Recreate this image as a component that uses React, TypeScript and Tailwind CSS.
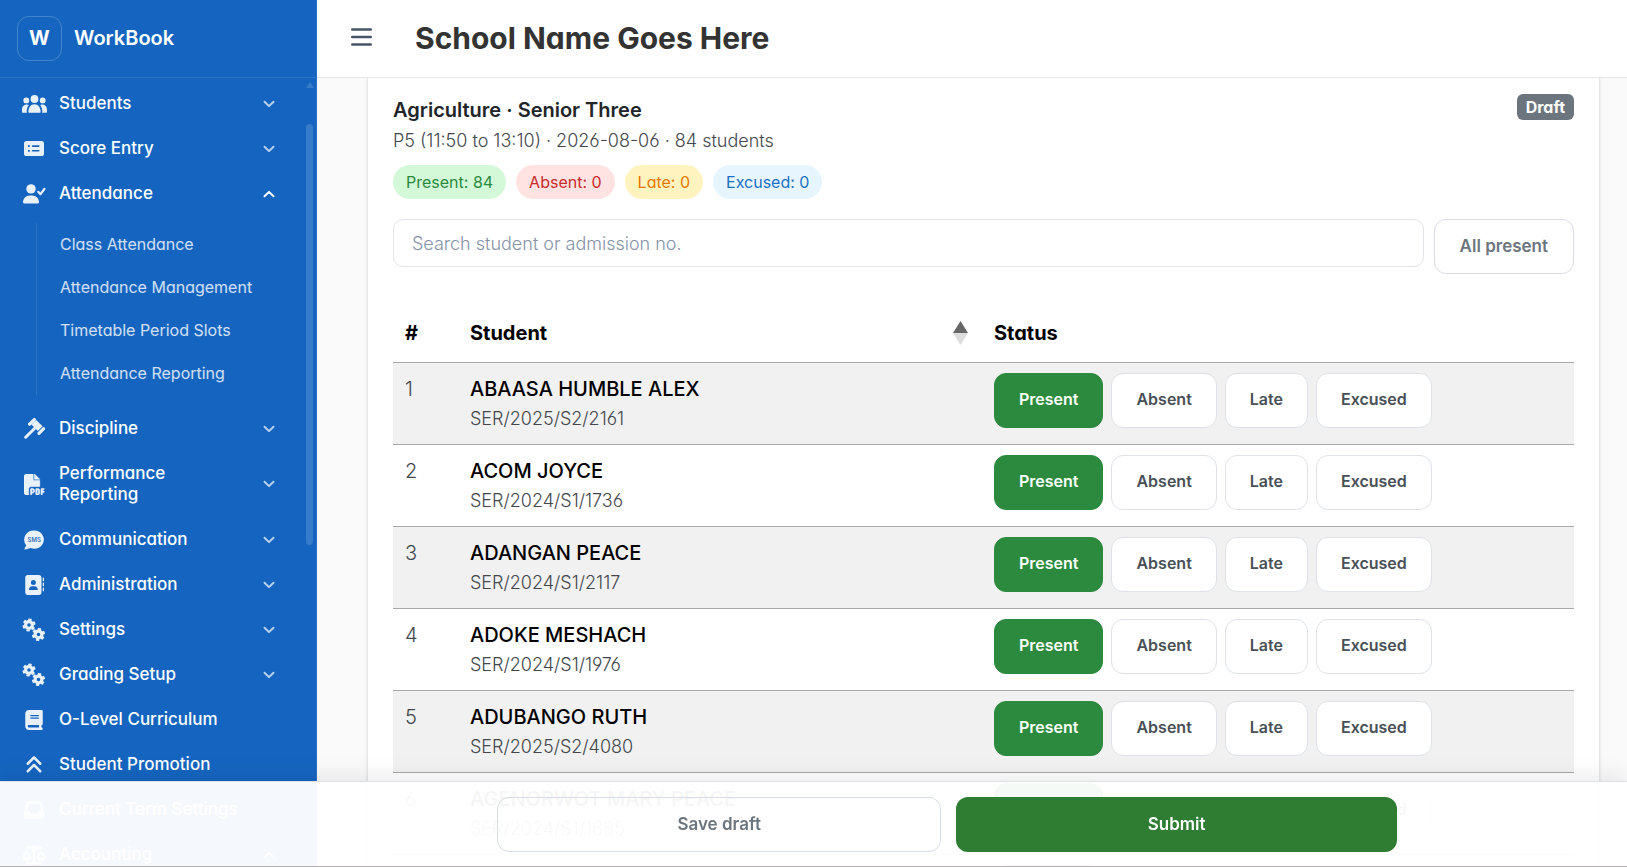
import { useState } from "react";
import type { ReactNode } from "react";
import { FaFilePdf, FaAddressBook, FaBook, FaAnglesUp, FaInbox, FaScaleBalanced } from "react-icons/fa6";

type NavItem = { label: string; icon: ReactNode; arrow?: "up" | "down"; children?: string[] };

function ListCardIcon() {
  return (
    <svg viewBox="0 0 20 15" className="h-[15px] w-5" aria-hidden="true">
      <path
        fill="currentColor"
        fillRule="evenodd"
        d="M2.6 0h14.8A2.6 2.6 0 0 1 20 2.6v9.8a2.6 2.6 0 0 1-2.6 2.6H2.6A2.6 2.6 0 0 1 0 12.4V2.6A2.6 2.6 0 0 1 2.6 0ZM4 4.200v1.800h1.800V4.200Zm0 4.700v1.800h1.800V8.900ZM8.600 4.300a.8.8 0 0 0 0 1.600h6.200a.8.8 0 0 0 0-1.600Zm0 4.700a.8.8 0 0 0 0 1.600h6.200a.8.8 0 0 0 0-1.600Z"
      />
    </svg>
  );
}

function PeopleIcon() {
  return (
    <svg viewBox="0 0 25 18" className="h-[18px] w-[25px] shrink-0" fill="currentColor" aria-hidden="true">
      <circle cx="12.500" cy="4" r="3.900" />
      <circle cx="4.300" cy="5.400" r="2.900" />
      <circle cx="20.700" cy="5.400" r="2.900" />
      <path d="M6.400 16.800C6.400 12.600 8.700 9.200 12.500 9.200s6.100 3.400 6.100 7.600c0 .7-.4 1-1 1H7.400c-.6 0-1-.3-1-1Z" />
      <path d="M6.800 10.100A4.800 4.800 0 0 0 4.600 9.600C1.800 9.600 0 12 0 15v1.700c0 .7.400 1.100 1 1.100h4c-.2-.3-.3-.7-.3-1.100 0-2.600.7-4.900 2.100-6.600Z" />
      <path d="M18.200 10.100a4.800 4.800 0 0 1 2.200-.5c2.800 0 4.600 2.400 4.600 5.400v1.700c0 .7-.4 1.100-1 1.100h-4c.2-.3.3-.7.300-1.100 0-2.600-.7-4.900-2.100-6.600Z" />
    </svg>
  );
}

function PersonCheckIcon() {
  return (
    <svg viewBox="0 0 24 20" className="h-5 w-6 shrink-0" fill="currentColor" aria-hidden="true">
      <circle cx="9" cy="4.900" r="4.700" />
      <path d="M1 18.300c0-4 2.900-6.900 6.600-6.900h2.800c3.700 0 6.600 2.900 6.600 6.900 0 .7-.5 1.200-1.200 1.200H2.200C1.500 19.500 1 19 1 18.300Z" />
      <path d="m16.200 7.800 2.300 2.400 3.900-5.200" fill="none" stroke="currentColor" strokeWidth="2.200" strokeLinecap="round" strokeLinejoin="round" />
    </svg>
  );
}

function GavelIcon() {
  return (
    <svg viewBox="0 0 21 21" className="size-[21px] shrink-0" stroke="currentColor" strokeLinecap="round" aria-hidden="true">
      <path d="m5.600 6.200 4.700-4.600M15 15.300l4.600-4.600" strokeWidth="3.200" />
      <path d="m7.400 6.600 4.800-4.700 6.400 6.400-4.800 4.700Z" fill="currentColor" stroke="none" />
      <path d="m1.700 19.200 8.600-8.500" strokeWidth="3" />
    </svg>
  );
}

function SmsBubbleIcon() {
  return (
    <svg viewBox="0 0 20 20" className="size-5 shrink-0" aria-hidden="true">
      <path d="M10.200.4a9.500 9.200 0 1 1-3.500 17.700L1.400 19.500c-.8.200-1.100-.4-.8-1l1.600-3.300A9.500 9.200 0 0 1 10.200.4Z" fill="currentColor" />
      <text x="10.200" y="12" textAnchor="middle" className="fill-[#1565c0] text-[6px] font-medium">SMS</text>
    </svg>
  );
}

const toothAngles = [10, 70, 130, 190, 250, 310];

function Gear({ x, y }: { x: number; y: number }) {
  return (
    <g transform={`translate(${x} ${y})`}>
      <circle r="3.400" strokeWidth="3.200" />
      {toothAngles.map((a) => (
        <g key={a} transform={`rotate(${a})`}>
          <path d="M0-4.600V-5.700" strokeWidth="3.400" />
          <path d="M-1.100-5.900h2.200" strokeWidth="1.200" strokeLinecap="round" />
        </g>
      ))}
    </g>
  );
}

function GearsIcon() {
  return (
    <svg viewBox="0 0 24 24" className="size-6 shrink-0" fill="none" stroke="currentColor" aria-hidden="true">
      <Gear x={7} y={7} />
      <Gear x={16.500} y={16.500} />
    </svg>
  );
}

const navItems: NavItem[] = [
  { label: "Students", icon: <PeopleIcon />, arrow: "down" },
  { label: "Score Entry", icon: <ListCardIcon />, arrow: "down" },
  {
    label: "Attendance",
    icon: <PersonCheckIcon />,
    arrow: "up",
    children: ["Class Attendance", "Attendance Management", "Timetable Period Slots", "Attendance Reporting"],
  },
  { label: "Discipline", icon: <GavelIcon />, arrow: "down" },
  { label: "Performance Reporting", icon: <FaFilePdf className="size-[21px]" stroke="currentColor" strokeWidth={14} />, arrow: "down" },
  { label: "Communication", icon: <SmsBubbleIcon />, arrow: "down" },
  { label: "Administration", icon: <FaAddressBook className="size-5" />, arrow: "down" },
  { label: "Settings", icon: <GearsIcon />, arrow: "down" },
  { label: "Grading Setup", icon: <GearsIcon />, arrow: "down" },
  { label: "O-Level Curriculum", icon: <FaBook className="size-5" /> },
  { label: "Student Promotion", icon: <FaAnglesUp className="size-5" /> },
  { label: "Current Term Settings", icon: <FaInbox className="size-5" /> },
  { label: "Accounting", icon: <FaScaleBalanced className="size-6" />, arrow: "up" },
];

const students = [
  { name: "ABAASA HUMBLE ALEX", no: "SER/2025/S2/2161" },
  { name: "ACOM JOYCE", no: "SER/2024/S1/1736" },
  { name: "ADANGAN PEACE", no: "SER/2024/S1/2117" },
  { name: "ADOKE MESHACH", no: "SER/2024/S1/1976" },
  { name: "ADUBANGO RUTH", no: "SER/2025/S2/4080" },
  { name: "AGENORWOT MARY PEACE", no: "SER/2024/S1/1885" },
  { name: "", no: "" },
];

const statuses = ["Present", "Absent", "Late", "Excused"];

function Chevron({ up }: { up: boolean }) {
  return (
    <svg viewBox="0 0 12 8" className={up ? "h-2 w-3 shrink-0 text-white" : "h-2 w-3 shrink-0 text-white/70"} fill="none" aria-hidden="true">
      <path d={up ? "M1.500 6.300 6 1.900l4.500 4.400" : "M1.500 1.700 6 6.100l4.500-4.400"} stroke="currentColor" strokeWidth="2" strokeLinecap="round" strokeLinejoin="round" />
    </svg>
  );
}

function Sidebar() {
  return (
    <aside className="flex w-[317px] shrink-0 flex-col border-r border-[#2a6fc5] bg-[#1565c0] text-white">
      <div className="flex h-[78px] shrink-0 items-center gap-3 border-b border-white/10 px-[17px] pb-px">
        <div className="flex size-[45px] items-center justify-center rounded-xl border border-white/20 text-xl font-bold">W</div>
        <span className="text-xl font-semibold">WorkBook</span>
      </div>
      <div className="flex min-h-0 flex-1">
        <nav className="min-w-0 flex-1 overflow-hidden pt-[3px]" aria-label="Main">
          {navItems.map((item) => (
            <div key={item.label}>
              <button type="button" className="flex w-full cursor-pointer items-center py-3 pr-7 pl-[22px] text-left text-[17px] leading-[21px] font-medium">
                <span className="flex h-5 w-6 shrink-0 items-center justify-center text-white/90">{item.icon}</span>
                <span className={item.arrow ? "mr-12 ml-[13px] flex-1" : "ml-[13px] flex-1"}>{item.label}</span>
                {item.arrow && <Chevron up={item.arrow === "up"} />}
              </button>
              {item.children && (
                <ul className="mt-[7px] mb-[11px] ml-9 border-l border-white/10">
                  {item.children.map((child) => (
                    <li key={child}>
                      <a href="#" className="block py-[11px] pl-[23px] text-base leading-[21px] whitespace-nowrap text-white/80">{child}</a>
                    </li>
                  ))}
                </ul>
              )}
            </div>
          ))}
        </nav>
        <div className="flex w-[13px] flex-col items-center pt-1" aria-hidden="true">
          <svg viewBox="0 0 8 6" className="h-[6px] w-2 text-white/15"><path d="M4 0 8 6H0Z" fill="currentColor" /></svg>
          <div className="mt-9 h-[421px] w-[7px] rounded-full bg-white/15" />
        </div>
      </div>
    </aside>
  );
}

function StatusPicker({ name }: { name: string }) {
  const [value, setValue] = useState("Present");
  return (
    <div className="flex gap-2" role="group" aria-label={name}>
      {statuses.map((status) => (
        <button
          key={status}
          type="button"
          aria-pressed={value === status}
          onClick={() => setValue(status)}
          className={
            value === status
              ? "h-[55px] cursor-pointer rounded-xl border border-[#2b8a3e] bg-[#2b8a3e] px-6 pb-[3px] text-base font-semibold text-white [font-feature-settings:normal]"
              : "h-[55px] cursor-pointer rounded-xl border border-[#dee2e6] bg-white px-6 pb-[3px] text-base font-semibold text-[#495057] [font-feature-settings:normal]"
          }
        >
          {status}
        </button>
      ))}
    </div>
  );
}

export default function App() {
  return (
    <div className="flex h-screen overflow-hidden bg-[#fafafa] font-['Inter',sans-serif] text-[#212529] [font-feature-settings:'cv03','cv04','cv11']">
      <Sidebar />
      <div className="flex min-w-0 flex-1 flex-col">
        <header className="flex h-[78px] shrink-0 items-center gap-[43px] border-b border-[#e4e6ea] bg-white px-[34px]">
          <button type="button" aria-label="Toggle menu" className="cursor-pointer pb-[3px] text-[#475569]">
            <svg viewBox="0 0 21 18" className="h-[18px] w-[21px]" fill="none" stroke="currentColor" strokeWidth="2.600" strokeLinecap="round">
              <path d="M1.300 1.500h18.400M1.300 9h18.400M1.300 16.500h18.400" />
            </svg>
          </button>
          <h1 className="text-[30px] font-bold text-[#333]">School Name Goes Here</h1>
        </header>

        <main className="min-h-0 flex-1 overflow-hidden pr-[27px] pl-[50px]">
          <section className="border-x border-[#e6e7e9] bg-white px-[25px] pt-4 shadow-sm">
            <div className="flex items-start justify-between">
              <div>
                <h2 className="text-xl leading-8 font-semibold">Agriculture · Senior Three</h2>
                <p className="text-lg leading-[30px] font-light text-[#43474c]">P5 (11:50 to 13:10) · 2026-08-06 · 84 students</p>
              </div>
              <span className="rounded-md bg-[#6c757d] px-[9px] text-base leading-[26px] font-bold text-white">Draft</span>
            </div>
            <div className="mt-[9px] flex gap-[10px] text-base leading-[34px]">
              <span className="rounded-full bg-[#d3f9d8] px-[13px] text-[#2b8a3e]">Present: 84</span>
              <span className="rounded-full bg-[#ffe3e3] px-[13px] text-[#c92a2a]">Absent: 0</span>
              <span className="rounded-full bg-[#fff3bf] px-[13px] text-[#e67700]">Late: 0</span>
              <span className="rounded-full bg-[#e7f5ff] px-[13px] text-[#1971c2]">Excused: 0</span>
            </div>
            <div className="mt-5 flex items-start gap-[10px]">
              <input
                type="search"
                aria-label="Search student or admission no."
                placeholder="Search student or admission no."
                className="h-12 min-w-0 flex-1 rounded-[10px] border border-[#e2e4ea] bg-white px-[18px] text-lg font-light placeholder:text-[#8592a8] [font-feature-settings:normal]"
              />
              <button type="button" className="h-[55px] cursor-pointer rounded-xl border border-[#dadce6] bg-white px-[25px] text-[17px] font-semibold text-[#6c757d] [font-feature-settings:normal]">
                All present
              </button>
            </div>
            <table className="mt-[30px] w-full table-fixed border-collapse text-left text-black">
              <colgroup>
                <col className="w-[65px]" />
                <col className="w-[524px]" />
                <col />
              </colgroup>
              <thead>
                <tr className="h-[58px] border-b border-[#a9a9a9] text-xl">
                  <th scope="col" className="px-3 font-bold">#</th>
                  <th scope="col" className="pr-[14px] pl-3 font-bold" aria-sort="ascending">
                    <span className="flex items-center justify-between">
                      Student
                      <svg viewBox="0 0 15 24" className="h-6 w-[15px]" aria-hidden="true">
                        <path d="M7.500 0 15 12H0Z" fill="#666" />
                        <path d="M7.500 24 15 12H0Z" fill="#ddd" />
                      </svg>
                    </span>
                  </th>
                  <th scope="col" className="px-3 font-bold">Status</th>
                </tr>
              </thead>
              <tbody>
                {students.map((s, i) => (
                  <tr key={i} className="h-[82px] border-b border-[#a9a9a9] align-top odd:bg-[#f1f1f1]">
                    <td className="px-3 pt-[10px] text-xl leading-8 font-light text-[#43474c]">{i + 1}</td>
                    <td className="px-3 pt-[10px]">
                      <div className="text-xl leading-8 font-medium">{s.name}</div>
                      <div className="text-lg leading-[28px] font-light text-[#43474c]">{s.no}</div>
                    </td>
                    <td className="px-3 pt-[10px]">
                      <StatusPicker name={s.name} />
                    </td>
                  </tr>
                ))}
              </tbody>
            </table>
          </section>
        </main>
      </div>

      <footer className="fixed inset-x-0 bottom-0 border-t border-b border-t-[#dee2e6] border-b-[#b5aeb2] bg-white/96 pt-[15px] pb-[14px] pl-[267px] shadow-[0_-6px_20px_rgba(0,0,0,0.08)]">
        <div className="mx-auto flex max-w-[900px] gap-[15px] text-[17px] font-semibold">
          <button type="button" className="h-[55px] flex-auto cursor-pointer rounded-xl border border-[#d8dce6] px-6 text-[#6c757d] [font-feature-settings:normal]">Save draft</button>
          <button type="button" className="h-[55px] flex-auto cursor-pointer rounded-xl bg-[#2e7d32] px-9 text-white [font-feature-settings:normal]">Submit</button>
        </div>
      </footer>
    </div>
  );
}
